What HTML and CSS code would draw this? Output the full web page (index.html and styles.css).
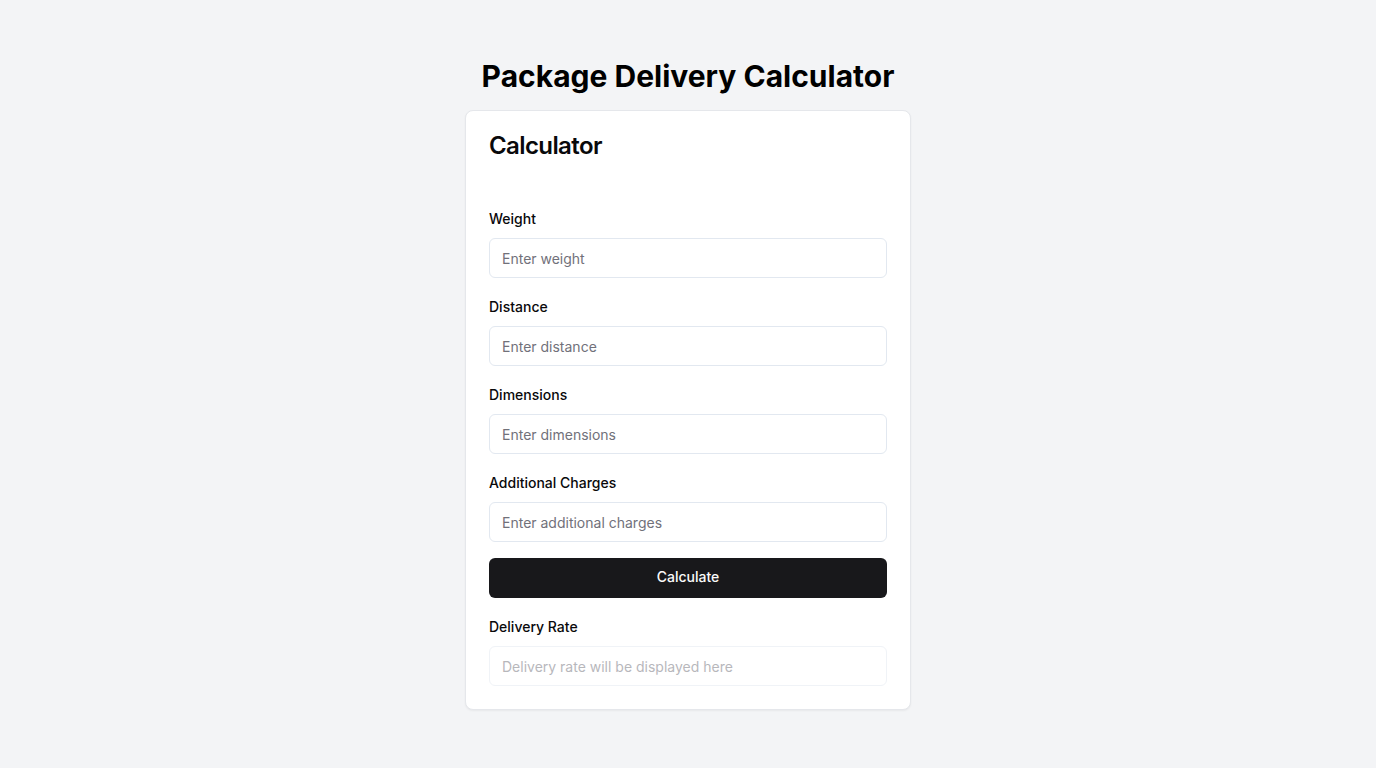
FILE: index.html
```html
<!DOCTYPE html>
<html lang="en">
<head>
<meta charset="utf-8">
<title>Package Delivery Calculator</title>
<link rel="stylesheet" href="styles.css">
</head>
<body>
<main class="page">
  <h1 class="page-title">Package Delivery Calculator</h1>
  <section class="card">
    <h2 class="card-title">Calculator</h2>
    <form class="form">
      <div class="field">
        <div class="label-row"><label class="label" for="weight">Weight</label></div>
        <input class="input" id="weight" type="text" placeholder="Enter weight">
      </div>
      <div class="field">
        <div class="label-row"><label class="label" for="distance">Distance</label></div>
        <input class="input" id="distance" type="text" placeholder="Enter distance">
      </div>
      <div class="field">
        <div class="label-row"><label class="label" for="dimensions">Dimensions</label></div>
        <input class="input" id="dimensions" type="text" placeholder="Enter dimensions">
      </div>
      <div class="field">
        <div class="label-row"><label class="label" for="charges">Additional Charges</label></div>
        <input class="input" id="charges" type="text" placeholder="Enter additional charges">
      </div>
      <button class="button" type="button">Calculate</button>
      <div class="field">
        <div class="label-row"><label class="label" for="rate">Delivery Rate</label></div>
        <input class="input input-disabled" id="rate" type="text" placeholder="Delivery rate will be displayed here" disabled>
      </div>
    </form>
  </section>
</main>
</body>
</html>
```

FILE: styles.css
```css
* { box-sizing: border-box; }

html, body {
  margin: 0;
  padding: 0;
}

body {
  background: #f3f4f6;
  font-family: Inter, "Noto Sans", "Liberation Sans", sans-serif;
  color: #09090b;
  font-size: 16px;
  line-height: 1.5;
}

.page {
  min-height: 100vh;
  display: flex;
  flex-direction: column;
  align-items: center;
  justify-content: center;
}

.page-title {
  margin: 0 0 16px;
  font-size: 30px;
  line-height: 36px;
  font-weight: 700;
  color: #000;
}

.card {
  width: 446px;
  background: #fff;
  border: 1px solid #e5e7eb;
  border-radius: 8px;
  box-shadow: 0 1px 2px rgba(0, 0, 0, 0.05);
  padding: 23px;
}

.card-title {
  margin: 0;
  font-size: 24px;
  line-height: 24px;
  font-weight: 600;
  letter-spacing: -0.025em;
}

.form {
  margin-top: 48px;
  display: flex;
  flex-direction: column;
  gap: 16px;
}

.field {
  display: flex;
  flex-direction: column;
  gap: 8px;
}

.label-row {
  line-height: 24px;
  height: 24px;
}

.label {
  font-size: 14px;
  font-weight: 500;
  line-height: 1;
}

.input {
  height: 40px;
  width: 100%;
  border: 1px solid #e2e8f0;
  border-radius: 6px;
  background: #fff;
  padding: 8px 12px;
  font-family: inherit;
  font-size: 14px;
  color: #09090b;
  outline: none;
}

.input::placeholder {
  color: #71717a;
}

.input-disabled {
  opacity: 0.5;
}

.button {
  height: 40px;
  width: 100%;
  border: none;
  border-radius: 6px;
  background: #18181b;
  color: #fafafa;
  font-family: inherit;
  font-size: 14px;
  line-height: 20px;
  font-weight: 500;
  padding: 9px 16px 11px;
  cursor: pointer;
}
```
